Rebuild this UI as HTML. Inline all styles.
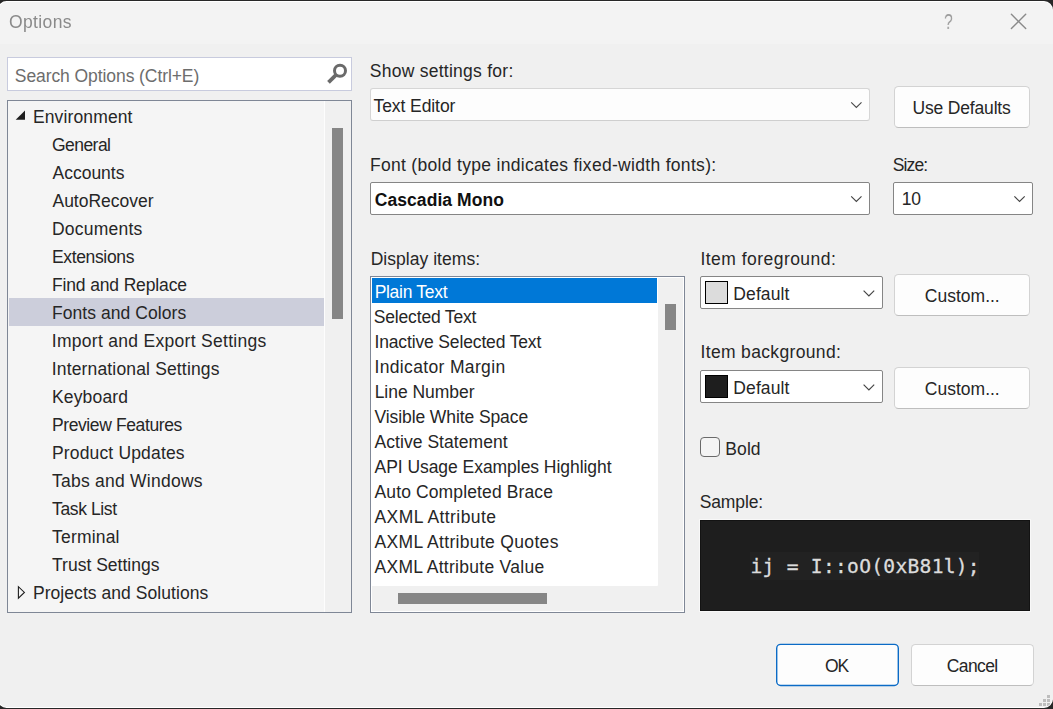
<!DOCTYPE html>
<html lang="en">
<head>
<meta charset="utf-8">
<title>Options</title>
<style>
html,body{margin:0;padding:0}
body{width:1053px;height:709px;overflow:hidden;position:relative;background:#f0f0f0;font-family:"Liberation Sans",sans-serif}
.a{position:absolute;box-sizing:border-box}
.t,.m{position:absolute;white-space:pre;line-height:24px;font-size:17.5px;color:#262626;font-family:"Liberation Sans",sans-serif}
.m{font-family:"DejaVu Sans Mono","Liberation Mono",monospace;-webkit-text-stroke:0.3px #dcdcdc}
#titlebar{left:0;top:0;width:1053px;height:44px;background:#f3f3f3}
#search{left:7px;top:57px;width:345px;height:34px;background:#fff;border:1px solid #c8cbde}
#tree{left:7px;top:100px;width:345px;height:513px;background:#f5f5f5;border:1px solid #7f8796}
#treesel{left:9px;top:298px;width:315px;height:28px;background:#cccedb}
#treetrack{left:324px;top:101px;width:27px;height:511px;background:#f0f0f0;border-left:1px solid #fdfdfd}
#treethumb{left:332px;top:128px;width:11px;height:191px;background:#868686}
.combo1{background:#fdfdfd;border:1px solid #d6d6d6;border-bottom-color:#cfcfcf;border-radius:3px}
.combo2{background:#fff;border:1px solid #858585;border-radius:2px}
.btn{background:#fdfdfd;border:1px solid #d3d3d3;border-bottom-color:#bebebe;border-radius:4.5px}
#list{left:370px;top:276px;width:315px;height:337px;background:#f0f0f0;border:1px solid #7f8796;box-shadow:inset 0 0 0 1px #fff}
#listwhite{left:371px;top:277px;width:287px;height:309px;background:#fff;border-radius:0 0 1px 0}
#listsel{left:372px;top:278px;width:285px;height:25px;background:#0078d7}
#vthumb{left:665px;top:304px;width:11px;height:26px;background:#868686}
#hthumb{left:398px;top:593px;width:149px;height:11px;background:#868686}
.sw{border:1px solid #000}
#chk{left:700px;top:437px;width:20px;height:20px;border:1px solid #6a6a6a;border-radius:4px;background:#f4f4f4}
#sample{left:700px;top:520px;width:330px;height:91px;background:#1e1e1e;border:1px solid #131313;box-shadow:0 0 0 1px #f8f8f8}
svg{position:absolute;overflow:hidden}
</style>
</head>
<body>
<div class="a" id="titlebar"></div>
<div class="a" id="search"></div>
<div class="a" id="tree"></div>
<div class="a" id="treetrack"></div>
<div class="a" id="treesel"></div>
<div class="a" id="treethumb"></div>

<div class="a combo1" style="left:370px;top:88px;width:500px;height:33px"></div>
<div class="a btn" style="left:894px;top:86px;width:136px;height:42px"></div>
<div class="a combo2" style="left:370px;top:182px;width:500px;height:33px"></div>
<div class="a combo2" style="left:893px;top:182px;width:140px;height:33px"></div>

<div class="a" id="list"></div>
<div class="a" id="listwhite"></div>
<div class="a" id="listsel"></div>
<div class="a" id="vthumb"></div>
<div class="a" id="hthumb"></div>

<div class="a combo2" style="left:700px;top:276px;width:183px;height:33px"></div>
<div class="a sw" style="left:705px;top:281px;width:23px;height:23px;background:#dcdcdc"></div>
<div class="a btn" style="left:894px;top:274px;width:136px;height:42px"></div>
<div class="a combo2" style="left:700px;top:370px;width:183px;height:33px"></div>
<div class="a sw" style="left:705px;top:375px;width:23px;height:23px;background:#1e1e1e"></div>
<div class="a btn" style="left:894px;top:367px;width:136px;height:42px"></div>
<div class="a" id="chk"></div>
<div class="a" id="sample"></div>
<div class="a" style="left:750px;top:552px;width:229px;height:28px;background:#222"></div>
<div class="a btn" style="left:911px;top:644px;width:123px;height:42px"></div>

<!-- icons -->
<svg width="1053" height="709" viewBox="0 0 1053 709" style="left:0;top:0">
  <rect x="776.7" y="644.4" width="121.6" height="41.1" rx="4" fill="#fdfdfd" stroke="#0b6bc6" stroke-width="1.4"/>
  <!-- close X -->
  <path d="M1011.4 14.3 L1025.7 28.6 M1025.7 14.3 L1011.4 28.6" stroke="#8a8a8a" stroke-width="1.4" stroke-linecap="round" fill="none"/>
  <!-- search magnifier -->
  <circle cx="340" cy="70.8" r="5.5" stroke="#6a6a6a" stroke-width="3" fill="none"/>
  <path d="M336.3 74.6 L328.5 82.3" stroke="#6a6a6a" stroke-width="3.8" fill="none"/>
  <!-- tree expanders -->
  <path d="M25 110.6 L25 119.8 L15.7 119.8 Z" fill="#1e1e1e"/>
  <path d="M18.4 586.7 L18.4 598.2 L24.4 592.45 Z" stroke="#1e1e1e" stroke-width="1.1" fill="none"/>
  <!-- chevrons -->
  <path d="M851.2 102.4 L856.35 107.4 L861.5 102.4" stroke="#4a4a4a" stroke-width="1.15" fill="none"/>
  <path d="M851.2 196.4 L856.35 201.4 L861.5 196.4" stroke="#444" stroke-width="1.15" fill="none"/>
  <path d="M1014.4 196.4 L1019.55 201.4 L1024.7 196.4" stroke="#444" stroke-width="1.15" fill="none"/>
  <path d="M863.6 290.7 L868.9 296 L874.2 290.7" stroke="#444" stroke-width="1.15" fill="none"/>
  <path d="M863.6 384.7 L868.9 390 L874.2 384.7" stroke="#444" stroke-width="1.15" fill="none"/>
  <!-- resize grip -->
  <g fill="#bdbdbd">
    <rect x="1047" y="695" width="3" height="3"/>
    <rect x="1043" y="699" width="3" height="3"/><rect x="1047" y="699" width="3" height="3"/>
    <rect x="1039" y="703" width="3" height="3"/><rect x="1043" y="703" width="3" height="3"/><rect x="1047" y="703" width="3" height="3"/>
  </g>
  <!-- window frame -->
  <path d="M-2 9.5 A8.5 8.5 0 0 1 6.5 1 H1044 A9 9 0 0 1 1053 10 M1053 699 A9 9 0 0 1 1044 708 H6.5 A8.5 8.5 0 0 1 -2 699.5" fill="none" stroke="#ffffff" stroke-width="2"/>
  <path fill-rule="evenodd" fill="#272727" d="M-10 -10 H1063 V719 H-10 Z M-2 9.5 A8.5 8.5 0 0 1 6.5 1 H1044 A9 9 0 0 1 1053 10 V699 A9 9 0 0 1 1044 708 H6.5 A8.5 8.5 0 0 1 -2 699.5 Z"/>
</svg>

<span class="t" id="help" style="will-change:transform;left:943.7px;top:9.6px;font-size:21.5px;color:#9a9a9a;transform:scaleX(0.74);transform-origin:0 0">?</span>
<span class="t" style="left:9.00px;top:9.94px;letter-spacing:0.379px;color:#8a8a8a;will-change:transform">Options</span>
<span class="t" style="left:14.80px;top:64.24px;letter-spacing:-0.080px;color:#6d6d6d">Search Options (Ctrl+E)</span>
<span class="t" style="left:32.93px;top:104.94px;letter-spacing:0.132px">Environment</span>
<span class="t" style="left:51.97px;top:132.94px;letter-spacing:-0.546px">General</span>
<span class="t" style="left:52.51px;top:160.94px;letter-spacing:-0.004px">Accounts</span>
<span class="t" style="left:52.51px;top:188.94px;letter-spacing:-0.017px">AutoRecover</span>
<span class="t" style="left:51.93px;top:216.94px;letter-spacing:0.237px">Documents</span>
<span class="t" style="left:51.93px;top:244.94px;letter-spacing:-0.345px">Extensions</span>
<span class="t" style="left:51.93px;top:272.94px;letter-spacing:-0.140px">Find and Replace</span>
<span class="t" style="left:51.93px;top:300.94px;letter-spacing:0.070px">Fonts and Colors</span>
<span class="t" style="left:51.77px;top:328.94px;letter-spacing:0.295px">Import and Export Settings</span>
<span class="t" style="left:51.77px;top:356.94px;letter-spacing:0.156px">International Settings</span>
<span class="t" style="left:51.93px;top:384.94px;letter-spacing:0.179px">Keyboard</span>
<span class="t" style="left:51.93px;top:412.94px;letter-spacing:-0.384px">Preview Features</span>
<span class="t" style="left:51.93px;top:440.94px;letter-spacing:0.166px">Product Updates</span>
<span class="t" style="left:52.06px;top:468.94px;letter-spacing:0.239px">Tabs and Windows</span>
<span class="t" style="left:52.06px;top:496.94px;letter-spacing:-0.378px">Task List</span>
<span class="t" style="left:52.06px;top:524.94px;letter-spacing:0.184px">Terminal</span>
<span class="t" style="left:52.06px;top:552.94px;letter-spacing:0.002px">Trust Settings</span>
<span class="t" style="left:32.93px;top:580.94px;letter-spacing:0.059px">Projects and Solutions</span>
<span class="t" style="left:369.80px;top:59.24px;letter-spacing:0.258px">Show settings for:</span>
<span class="t" style="left:373.46px;top:93.64px;letter-spacing:-0.074px">Text Editor</span>
<span class="t" style="left:912.41px;top:96.24px;letter-spacing:-0.161px">Use Defaults</span>
<span class="t" style="left:369.93px;top:152.94px;letter-spacing:0.308px">Font (bold type indicates fixed-width fonts):</span>
<span class="t" style="left:374.77px;top:187.64px;letter-spacing:0.061px;font-weight:700;color:#101010">Cascadia Mono</span>
<span class="t" style="left:892.80px;top:152.94px;letter-spacing:-0.885px">Size:</span>
<span class="t" style="left:901.72px;top:186.54px;letter-spacing:-0.278px">10</span>
<span class="t" style="left:370.63px;top:246.64px;letter-spacing:0.040px">Display items:</span>
<span class="t" style="left:374.63px;top:279.94px;letter-spacing:-0.292px;color:#ffffff">Plain Text</span>
<span class="t" style="left:373.80px;top:304.94px;letter-spacing:-0.176px">Selected Text</span>
<span class="t" style="left:374.47px;top:329.94px;letter-spacing:-0.145px">Inactive Selected Text</span>
<span class="t" style="left:374.47px;top:354.94px;letter-spacing:0.348px">Indicator Margin</span>
<span class="t" style="left:374.63px;top:379.94px;letter-spacing:-0.020px">Line Number</span>
<span class="t" style="left:374.47px;top:404.94px;letter-spacing:-0.091px">Visible White Space</span>
<span class="t" style="left:374.51px;top:429.94px;letter-spacing:0.052px">Active Statement</span>
<span class="t" style="left:374.51px;top:454.94px;letter-spacing:-0.045px">API Usage Examples Highlight</span>
<span class="t" style="left:374.51px;top:479.94px;letter-spacing:0.126px">Auto Completed Brace</span>
<span class="t" style="left:374.51px;top:504.94px;letter-spacing:0.415px">AXML Attribute</span>
<span class="t" style="left:374.51px;top:529.94px;letter-spacing:0.328px">AXML Attribute Quotes</span>
<span class="t" style="left:374.51px;top:554.94px;letter-spacing:0.275px">AXML Attribute Value</span>
<span class="t" style="left:700.47px;top:246.64px;letter-spacing:0.463px">Item foreground:</span>
<span class="t" style="left:733.33px;top:281.94px;letter-spacing:0.101px">Default</span>
<span class="t" style="left:924.80px;top:283.94px;letter-spacing:0.007px">Custom...</span>
<span class="t" style="left:700.47px;top:339.64px;letter-spacing:0.344px">Item background:</span>
<span class="t" style="left:733.33px;top:376.14px;letter-spacing:0.101px">Default</span>
<span class="t" style="left:924.80px;top:376.94px;letter-spacing:0.007px">Custom...</span>
<span class="t" style="left:725.33px;top:436.64px;letter-spacing:0.081px">Bold</span>
<span class="t" style="left:699.70px;top:490.24px;letter-spacing:-0.131px">Sample:</span>
<span class="m" style="left:750.49px;top:555.22px;letter-spacing:0.280px;font-size:19.6px;color:#dcdcdc">ij = I::oO(0xB81l);</span>
<span class="t" style="left:825.00px;top:653.94px;letter-spacing:-1.141px">OK</span>
<span class="t" style="left:946.80px;top:653.94px;letter-spacing:-0.627px">Cancel</span>
</body>
</html>
